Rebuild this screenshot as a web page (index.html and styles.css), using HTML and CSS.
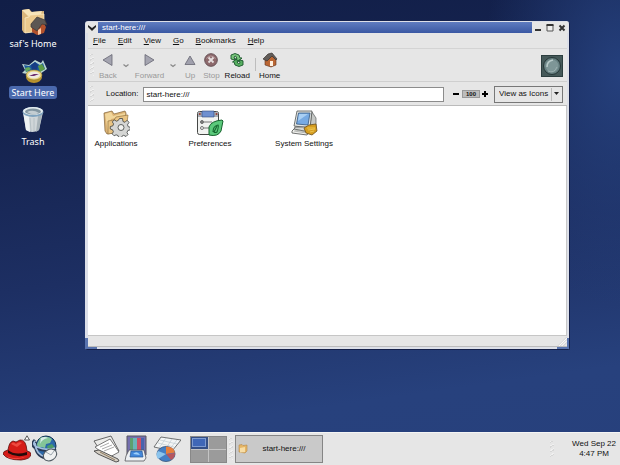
FILE: index.html
```html
<!DOCTYPE html>
<html lang="en">
<head>
<meta charset="utf-8">
<title>start-here:///</title>
<link rel="stylesheet" href="styles.css">
</head>
<body>
<main class="desktop">
  <nav class="shortcuts" aria-label="Desktop">
    <a class="shortcut" href="#home">
      <svg width="30" height="27" viewBox="0 0 30 27">
        <path d="M4 2l7-1 3 3 12-1v17l-3 3-17 2-2-3z" fill="#d9b57b"/>
        <path d="M4 2l7-1 2 3 11-1-1 3-13 2z" fill="#f7e4b8"/>
        <path d="M4 4l3 20V10l4-2 15-2v14l-4 3-15 2z" fill="#f0d6a0"/>
        <path d="M7 10l4-1 1-2 14-1v13l-4 4-15 2z" fill="#ecca8e" stroke="#fbecc8" stroke-width=".7"/>
        <path d="M14 18l9-6 5 7-2 6-7 2-5-3z" fill="#b2512c"/>
        <path d="M13 16l6-7 8 3 2 5-5-1-5 7-6-4z" fill="#5c5753" stroke="#3c3634" stroke-width=".7"/>
        <path d="M20 22l3-2v6l-3 1z" fill="#ffc9a2"/>
      </svg>
      <span>saf's Home</span>
    </a>
    <a class="shortcut selected" href="#start">
      <svg width="30" height="27" viewBox="0 0 30 27">
        <path d="M4 7l7 1 6-5 6 3 2-3 4 9-7 5-8-2-5 2-5-1 3-3z" fill="#b9d4d2"/>
        <path d="M6 8l5 1 6-4 5 3 3-2 2 6-6 3-7-2-6 2z" fill="#1c5a9c"/>
        <path d="M13 8l4-3 3 3-1 6-5-1z" fill="#173d86"/>
        <path d="M20 9l4-2 3 5-5 3z" fill="#5d9b45"/>
        <path d="M7 11l4-1 2 2-5 3z" fill="#62a75a"/>
        <ellipse cx="16" cy="20" rx="8" ry="6" fill="#b8922d"/>
        <ellipse cx="16" cy="18" rx="8" ry="5" fill="#e9d37a" stroke="#8b7735" stroke-width=".6"/>
        <ellipse cx="16" cy="18" rx="6" ry="3.500" fill="#efeadf"/>
        <path d="M11 19l5-2 5 0-5 2z" fill="#6b2b6b"/>
      </svg>
      <span>Start Here</span>
    </a>
    <a class="shortcut" href="#trash">
      <svg width="30" height="27" viewBox="0 0 30 27">
        <path d="M5 5l3 19q6 4 13 0l4-18z" fill="#cfd5d8"/>
        <path d="M5 6l3 18 4 2-1-16z" fill="#eef2f3"/>
        <path d="M20 10l4-2-3 16-3 2z" fill="#a7b2b8"/>
        <path d="M12 12l1 13M16 12v13" stroke="#b6c0c5"/>
        <ellipse cx="15" cy="6" rx="10.500" ry="5" fill="#7fa3bf"/>
        <ellipse cx="15" cy="5" rx="10" ry="4" fill="#e6edf0"/>
        <ellipse cx="15" cy="5.500" rx="8" ry="3" fill="#8295a0"/>
        <path d="M9 6q6-3 12 1-6 3-12-1z" fill="#c3cdd2"/>
      </svg>
      <span>Trash</span>
    </a>
  </nav>

  <section class="window" aria-label="File browser">
    <header class="titlebar">
      <button class="frame-button" aria-label="Window menu"><svg width="12" height="11" viewBox="0 0 12 11"><path d="M2 3l4 3 4-3v2L6 9 2 5z" fill="#222"/></svg></button>
      <h1 class="title">start-here:///</h1>
      <button class="frame-button" aria-label="Minimize"><svg width="12" height="11" viewBox="0 0 12 11"><path d="M3 7h6v2H3z" fill="#333"/></svg></button>
      <button class="frame-button" aria-label="Maximize"><svg width="12" height="11" viewBox="0 0 12 11"><path d="M3 3h6v6H3z" fill="#eee" stroke="#555"/><path d="M2.500 2h7v2h-7z" fill="#333"/></svg></button>
      <button class="frame-button" aria-label="Close"><svg width="12" height="11" viewBox="0 0 12 11"><path d="M3.500 3.500l5 5M8.500 3.500l-5 5" stroke="#333" stroke-width="2"/></svg></button>
    </header>

    <div class="client">
      <nav class="menubar" aria-label="Menu">
        <button><u>F</u>ile</button>
        <button><u>E</u>dit</button>
        <button><u>V</u>iew</button>
        <button><u>G</u>o</button>
        <button><u>B</u>ookmarks</button>
        <button><u>H</u>elp</button>
      </nav>

      <div class="toolbar">
        <i class="grip"></i>
        <button class="tool" disabled><svg width="16" height="16" viewBox="0 0 16 16"><path d="M12 2.500v11L3 8z" fill="#a4a4b0" stroke="#666672" stroke-width=".8"/></svg>Back</button>
        <button class="history" disabled aria-label="Back history"><svg width="8" height="6" viewBox="0 0 8 6"><path d="M1.500 1.500L4 3.500l2.500-2" fill="none" stroke="#888" stroke-width="1.200"/></svg></button>
        <button class="tool" disabled><svg width="16" height="16" viewBox="0 0 16 16"><path d="M4 2.500v11L13 8z" fill="#a4a4b0" stroke="#666672" stroke-width=".8"/></svg>Forward</button>
        <button class="history" disabled aria-label="Forward history"><svg width="8" height="6" viewBox="0 0 8 6"><path d="M1.500 1.500L4 3.500l2.500-2" fill="none" stroke="#888" stroke-width="1.200"/></svg></button>
        <button class="tool" disabled><svg width="16" height="16" viewBox="0 0 16 16"><path d="M3 12.500h10L8 4z" fill="#a0a0ad" stroke="#666672" stroke-width=".8"/></svg>Up</button>
        <button class="tool" disabled><svg width="16" height="16" viewBox="0 0 16 16"><circle cx="8" cy="8" r="6.300" fill="#8d696c" stroke="#665055"/><path d="M3.500 6.500q4-5 9 0" fill="none" stroke="#b79a9c"/><path d="M5.500 5.500l5 5M10.500 5.500l-5 5" stroke="#e6dfdf" stroke-width="1.800"/></svg>Stop</button>
        <button class="tool"><svg width="16" height="16" viewBox="0 0 16 16"><path d="M2 3l4-1.500L10 3l1 3h2L9.500 9 6 7l2-.5L6.500 4 5 5l1 3-4-1z" fill="#78c57b" stroke="#19562a" stroke-width=".9"/><path d="M14 13l-4 1.500L6 13l-1-3H3.500L7 7.500 10 9l-2 .8 1.500 2 1.500-1-1-3 4 1z" fill="#58af61" stroke="#19562a" stroke-width=".9"/></svg>Reload</button>
        <div class="tool-group">
          <i class="separator"></i>
          <button class="tool"><svg width="16" height="16" viewBox="0 0 16 16"><path d="M3 7l6-4 5 5v5l-5 2-6-2z" fill="#ba6633" stroke="#5a3424" stroke-width=".6"/><path d="M1 7l5-5 4-1 5 6-1 1-4-4-5 5z" fill="#625d59" stroke="#393431" stroke-width=".7"/><path d="M8 9h3v5H8z" fill="#fff0df"/></svg>Home</button>
        </div>
        <div class="throbber" aria-hidden="true"><svg width="22" height="22" viewBox="0 0 22 22"><path d="M0 0h22v22H0z" fill="#2c3e3f"/><path d="M1 1h20v20H1z" fill="#455959"/><circle cx="11" cy="11" r="8.500" fill="#667f80" stroke="#263738"/><circle cx="11" cy="11" r="6.500" fill="#7e9697"/><path d="M6 12q0-6 6-7" fill="none" stroke="#b9cbca" stroke-width="1.500"/><path d="M7 16q6 3 9-4" fill="none" stroke="#9db1b1"/></svg></div>
      </div>

      <div class="locationbar">
        <i class="grip"></i>
        <label for="location">Location:</label>
        <input id="location" type="text" value="start-here:///">
        <div class="zoom">
          <button aria-label="Zoom out"><svg width="7" height="8" viewBox="0 0 7 8"><path d="M0 3h6v2H0z"/></svg></button>
          <button class="zoom-level">100</button>
          <button aria-label="Zoom in"><svg width="7" height="8" viewBox="0 0 7 8"><path d="M0 3h2V1h2v2h2v2H4v2H2V5H0z"/></svg></button>
        </div>
        <div class="view-mode">
          <select aria-label="View mode"><option>View as Icons</option></select>
          <svg width="11" height="13" viewBox="0 0 11 13"><path d="M.5 0v13" stroke="#bbb"/><path d="M3 4h5L5.500 7z" fill="#222"/></svg>
        </div>
      </div>

      <div class="files">
        <a class="file" href="#applications">
          <svg width="28" height="28" viewBox="0 0 28 28">
            <path d="M2 4l8-2 2 3 11-3 1 2v18l-19 3-2-3z" fill="#dcb374" stroke="#806238" stroke-width=".7"/>
            <path d="M3 5l6-2 2 4 12-3v3L9 10 6 23z" fill="#f1d69b"/>
            <path d="M6 12l6-1 2-3 12-2-2 16-18 3z" fill="#e9c483" stroke="#94733f" stroke-width=".7"/>
            <g fill="#d5d6d4" stroke="#3e4140" stroke-width=".8"><path d="M17.500 11h3l.5 3 2 .8 2-2 2 2-1.500 2.500.8 2 2 .4v2.600l-2.500.7-.8 2 1 2-2 2-2.300-1.200-1.700.8-.7 2h-2.500l-.7-2.500-2-.8-2 1-2-2 1.300-2-.8-2-2.300-.8v-2.500l2.500-.6.8-2-1.300-2 2-2 2.200 1.300 1.800-.8z" transform="translate(0 -1.500)"/><circle cx="19" cy="18.500" r="3" fill="#f2f2ef"/></g>
          </svg>
          <span>Applications</span>
        </a>
        <a class="file" href="#preferences">
          <svg width="28" height="28" viewBox="0 0 28 28">
            <rect x="1.500" y="2.500" width="21" height="23" rx="2" fill="#f1f2f0" stroke="#454745"/>
            <path d="M2 3h20v5H2z" fill="#a9adb5"/>
            <path d="M6 2h12v6H6z" fill="#6f90d0" stroke="#304779" stroke-width=".6"/>
            <circle cx="3.800" cy="5" r="1" fill="#9a3b32"/><circle cx="20.500" cy="5" r="1" fill="#9a3b32"/>
            <path d="M8 13h8M8 19h6" stroke="#777"/>
            <circle cx="6" cy="13" r="1.500" fill="#888" stroke="#444" stroke-width=".7"/><circle cx="6" cy="19" r="1.500" fill="#eee" stroke="#444" stroke-width=".7"/>
            <path d="M13 26V18q2-6 13-7l1 1-2 10q-3 6-12 4z" fill="#5bc97b" stroke="#15632d"/>
            <path d="M17 23q0-6 5-7 1 1-1 7-2 1-3 0l3-6" fill="none" stroke="#14682f" stroke-width="1.100"/>
          </svg>
          <span>Preferences</span>
        </a>
        <a class="file" href="#settings">
          <svg width="28" height="28" viewBox="0 0 28 28">
            <path d="M22 3l4 6v11l-7 2z" fill="#c5c8c6" stroke="#5c5f5e" stroke-width=".7"/>
            <path d="M7 2h15l-2 17-16-2z" fill="#e3e5e2" stroke="#505453" stroke-width=".8"/>
            <path d="M8.500 4h11.500L18 16 6.500 15z" fill="#77aae3" stroke="#34567d" stroke-width=".8"/>
            <path d="M9 5h9L8 12z" fill="#a9cff4"/>
            <path d="M5 18h12l4 3-2 3-16-1z" fill="#d2d5d2" stroke="#555" stroke-width=".8"/>
            <path d="M2 22l2-2 15 3-2 3L2 24z" fill="#f0f0ed" stroke="#4e504f" stroke-width=".8"/>
            <path d="M4 22l12 2M5 21l12 2" stroke="#909391" stroke-width=".6"/>
            <path d="M14 19l5-3 7-1 1 7-5 4-6-2z" fill="#d69e20" stroke="#6f501a" stroke-width=".8"/>
            <path d="M17 19h8M18 21l7-1M20 23l4-1" stroke="#f7d466" stroke-width=".7"/>
          </svg>
          <span>System Settings</span>
        </a>
      </div>

      <footer class="statusbar"><svg width="11" height="11" viewBox="0 0 12 12"><path d="M12 2L2 12M12 5l-7 7M12 8l-4 4" stroke="#ccc"/><path d="M12 3l-9 9M12 6l-6 6" stroke="#fff"/></svg></footer>
    </div>
    <i class="corner corner-left"></i>
    <i class="corner corner-right"></i>
  </section>
</main>

<footer class="panel">
  <div class="launchers">
    <button aria-label="Main menu"><svg width="28" height="28" viewBox="0 0 28 28">
      <path d="M0 19q0-3 5-4 1-8 5-9l3 1 4-2q6-1 7 11 4 1 4 3 0 5-10 6Q4 25 0 19z" fill="#d51c18" stroke="#5e0e0c" stroke-width=".8"/>
      <path d="M5 15q7 6 19 2v3q-11 3-19-2z" fill="#240b0a"/><path d="M8 9q2-3 5 0 3-3 6-1l-5 4z" fill="#ee4a40"/><path d="M2 20q9 6 22 1-8 5-18 2z" fill="#ff4940"/>
      <path d="M21.500 5L24 .8 26.500 5z" fill="#fff" stroke="#333" stroke-width=".8"/>
    </svg></button>
    <button aria-label="Web browser"><svg width="28" height="28" viewBox="0 0 28 28">
      <circle cx="14" cy="11" r="10" fill="#2b69ab" stroke="#123151"/>
      <path d="M8 3q7-3 12 1l-2 4-4 1-1 4-4-1-3 2-1-5z" fill="#84c598"/><path d="M15 11l5-2 3 4-4 5-3-2z" fill="#4a9b68"/><path d="M9 3q4-2 7 0-6 1-8 6z" fill="#d8ecea"/>
      <path d="M3 5q-5 5 1 8 11 5 20 1M3 7q0 14 11 16" fill="none" stroke="#293a55" stroke-width="3"/><path d="M3 6q-3 4 2 6 10 4 18 1M3 8q1 12 11 14" fill="none" stroke="#a4bfdf" stroke-width="1.800"/>
      <ellipse cx="18" cy="20" rx="7" ry="5.500" transform="rotate(-30 18 20)" fill="#eff1f1" stroke="#4f5961"/><path d="M14 17l5 3 3-4" fill="none" stroke="#9ba6ae"/>
    </svg></button>
  </div>
  <div class="launchers office">
    <button aria-label="Word processor"><svg width="28" height="28" viewBox="0 0 28 28">
      <path d="M1 6L18 1l8 15-16 4z" fill="#ececea" stroke="#454545" stroke-width=".8"/><path d="M2 12l15-8 9 13-11 6z" fill="#fff" stroke="#555" stroke-width=".8"/>
      <path d="M7 12l9-4M9 14l10-4M11 16l10-4" stroke="#aaa"/><path d="M1 16l5-1 19 9 1 2-3 1-18-8z" fill="#d3cdc2" stroke="#333" stroke-width=".8"/><path d="M7 17l15 8" stroke="#8f7c61"/>
    </svg></button>
    <button aria-label="Presentation"><svg width="28" height="28" viewBox="0 0 28 28">
      <path d="M4 1h19v19H4z" fill="#746fae" stroke="#56565f"/><path d="M7 3h3v14H7z" fill="#5da06e"/><path d="M10 3h4v14h-4z" fill="#6bb4b8"/><path d="M14 3h4v14h-4z" fill="#cd5265"/><path d="M18 3h3v14h-3z" fill="#4863ad"/>
      <path d="M6 15h15l2 8-2 3H2l1-5z" fill="#edf0f3" stroke="#55575a" stroke-width=".8"/><path d="M8 16h11l1 6H7z" fill="#4387da" stroke="#275490" stroke-width=".7"/><path d="M10 19q4-4 7 1z" fill="#9fd0fa"/>
    </svg></button>
    <button aria-label="Spreadsheet"><svg width="28" height="28" viewBox="0 0 28 28">
      <path d="M8 2l20 3-9 11L1 12z" fill="#f3f5f5" stroke="#515354" stroke-width=".8"/><path d="M7 5l17 4M5 8l16 4M13 3L6 13M19 4l-7 11M24 5l-8 10" stroke="#b7c5cd" stroke-width=".6"/>
      <ellipse cx="13" cy="19" rx="9" ry="7.500" fill="#447fc5" stroke="#345077" stroke-width=".8"/><path d="M13 19V11.500q8 0 9 6z" fill="#e77f3d"/><path d="M13 19l-8 5q-3-4 0-8z" fill="#8bc4ed"/><path d="M13 19l9-1q0 5-4 7z" fill="#b7555d"/>
    </svg></button>
  </div>
  <div class="pager" aria-label="Workspaces">
    <button class="current" aria-label="Workspace 1"><i></i></button><button aria-label="Workspace 2"></button>
    <button aria-label="Workspace 3"></button><button aria-label="Workspace 4"></button>
  </div>
  <i class="grip task-grip"></i>
  <button class="task">
    <svg width="10" height="10" viewBox="0 0 10 10"><path d="M1 1l3-.5 1 1 4-.5v6L7 9 1 8z" fill="#e5b565" stroke="#b68a4b" stroke-width=".6"/><path d="M2 4l5-1v5l-5 .5z" fill="#f7dda5"/></svg>
    <span>start-here:///</span>
  </button>
  <i class="grip tray-grip"></i>
  <time class="clock">Wed Sep 22<br>4:47 PM</time>
</footer>
</body>
</html>
```

FILE: styles.css
```css
* {
  box-sizing: border-box;
}

body {
  display: flex;
  flex-direction: column;
  height: 100vh;
  margin: 0;
  overflow: hidden;
  color: #111;
  font: 8px/10px "Liberation Sans", sans-serif;
  background:
    radial-gradient(ellipse 22% 50% at 100% 16%, #25407c 0%, transparent 100%),
    linear-gradient(172deg, #111e47 0%, #15234f 24%, #1d2f63 53%, #27417d 82%, #27407c 100%);
}

button,
input,
select {
  margin: 0;
  padding: 0;
  border: 0;
  color: inherit;
  font: inherit;
  background: none;
}

a {
  color: inherit;
  text-decoration: none;
}

svg {
  display: block;
  flex: none;
}

.grip {
  flex: none;
  width: 4px;
  background: repeating-linear-gradient(150deg, #f0f0f0 0 1px, #d6d6d6 1px 2px, #e6e6e6 2px 4px);
}

/* Desktop */

.desktop {
  position: relative;
  flex: 1;
}

.shortcuts {
  display: flex;
  flex-direction: column;
  gap: 7px;
  width: 66px;
  padding-top: 8px;
}

.shortcut {
  display: flex;
  flex-direction: column;
  align-items: center;
  gap: 2px;
  color: #fff;
  font: 9px/13px "Noto Sans", sans-serif;
}

.shortcut span {
  padding: 0 3px;
  border-radius: 3px;
}

.selected span {
  background: #4a69ad;
}

/* Window */

.window {
  position: absolute;
  inset: 21px 50px 82px 85px;
  display: flex;
  flex-direction: column;
  padding: 1px 2px 2px 3px;
  border: 1px solid #14204a;
  border-width: 0 1px 1px 0;
  border-radius: 3px 3px 2px 2px;
  background: #dcdfe8;
}

.titlebar {
  display: flex;
  height: 11px;
  margin-left: -2px;
  margin-right: -1px;
}

.title {
  flex: 1;
  margin: 0;
  padding-left: 4px;
  color: #fff;
  font: 8px/11px "Liberation Sans", sans-serif;
  background: linear-gradient(#5f7cc0, #3a58a3);
}

.frame-button {
  background: #e6e6e6;
}

.client {
  display: flex;
  flex: 1;
  flex-direction: column;
  background: #e6e6e6;
}

.menubar {
  display: flex;
  gap: 12px;
  height: 16px;
  padding: 0 5px;
  border-bottom: 1px solid #d4d4d4;
}

.toolbar {
  display: flex;
  gap: 5px;
  height: 33px;
  padding: 3px 4px 1px 2px;
  border-bottom: 1px solid #cfcfcf;
}

.toolbar .grip {
  margin: 2px 0 4px;
}

.tool {
  display: flex;
  flex-direction: column;
  align-items: center;
  gap: 3px;
  min-width: 16px;
}

.tool:disabled {
  color: #999;
}

.history {
  padding-top: 3px;
}

.history svg {
  margin-bottom: 4px;
}

.tool-group {
  display: flex;
  gap: 3px;
}

.separator {
  width: 1px;
  margin: 6px 0 9px;
  background: #bdbdbd;
}

.throbber {
  margin: 3px 0 0 auto;
}

.locationbar {
  display: flex;
  align-items: center;
  height: 24px;
  padding: 1px 4px 0 2px;
  border-bottom: 1px solid #bbb;
}

.locationbar .grip {
  height: 16px;
}

.locationbar label {
  margin: 0 5px 0 12px;
}

.locationbar input {
  flex: 1;
  min-width: 0;
  height: 15px;
  padding: 0 2px;
  border: 1px solid #8c8c8c;
  background: #fff;
}

.zoom {
  display: flex;
  align-items: center;
  gap: 2px;
  margin: 0 5px 0 9px;
}

.zoom-level {
  width: 18px;
  height: 8px;
  border: 1px solid #999;
  font-size: 6px;
  font-weight: bold;
  line-height: 6px;
  background: #bcbcbc;
}

.view-mode {
  display: grid;
  align-items: center;
}

.view-mode select,
.view-mode svg {
  grid-area: 1 / 1;
}

.view-mode select {
  width: 69px;
  height: 17px;
  padding-left: 4px;
  border: 1px solid #777;
  appearance: none;
}

.view-mode svg {
  justify-self: end;
  margin-right: 1px;
  pointer-events: none;
}

.files {
  display: flex;
  flex: 1;
  gap: 40px;
  align-items: flex-start;
  padding: 3px 0 0 1px;
  border-right: 1px solid #c8c8c8;
  background: #fff;
}

.file {
  display: flex;
  flex-direction: column;
  align-items: center;
  gap: 2px;
  width: 54px;
  white-space: nowrap;
}

.statusbar {
  display: flex;
  justify-content: flex-end;
  align-items: flex-end;
  height: 12px;
  border-top: 1px solid #c6c6c6;
  border-bottom: 1px solid #bcbcbc;
}

.corner {
  position: absolute;
  bottom: 0;
  width: 12px;
  height: 11px;
  border: 0 solid #5873ae;
  border-bottom-width: 2px;
}

.corner-left {
  left: 0;
  border-left-width: 3px;
}

.corner-right {
  right: 0;
  border-right-width: 2px;
}

/* Panel */

.panel {
  display: flex;
  align-items: center;
  height: 33px;
  padding: 0 4px 0 3px;
  border-top: 1px solid #f4f4f4;
  background: #e6e6e6;
}

.launchers {
  display: flex;
  gap: 1px;
}

.office {
  gap: 2px;
  margin: 0 9px 0 33px;
}

.pager {
  display: grid;
  grid-template: 1fr 1fr / 1fr 1fr;
  gap: 1px;
  width: 37px;
  height: 27px;
  border: 1px solid #888;
  background: #c4c4c4;
}

.pager button {
  background: #9b9b9b;
}

.pager .current {
  padding: 1px 2px 2px 1px;
  background: #344f86;
}

.current i {
  display: block;
  height: 9px;
  border: 1px solid #7e9bd0;
  background: #3f67b7;
}

.task-grip {
  height: 22px;
  margin: 0 2px;
}

.task {
  display: flex;
  align-items: center;
  width: 88px;
  height: 28px;
  padding: 0 2px;
  border: 1px solid #858585;
  background: #c9c9c9;
}

.task span {
  flex: 1;
}

.tray-grip {
  height: 16px;
  margin-left: auto;
}

.clock {
  margin-left: 18px;
  text-align: center;
}
```
